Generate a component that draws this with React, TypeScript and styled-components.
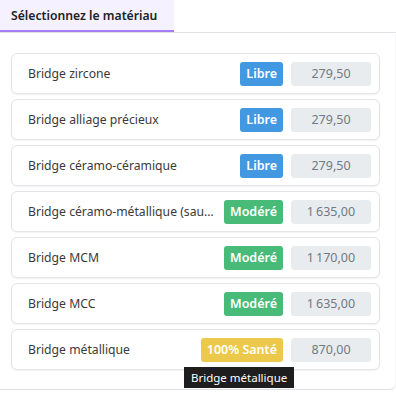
import React from 'react';
import styled, {createGlobalStyle} from "styled-components";

type Level = 'libre' | 'modere' | 'sante';

const items: {name: string; level: Level; price: string}[] = [
    {name: 'Bridge zircone', level: 'libre', price: '279,50'},
    {name: 'Bridge alliage précieux', level: 'libre', price: '279,50'},
    {name: 'Bridge céramo-céramique', level: 'libre', price: '279,50'},
    {name: 'Bridge céramo-métallique (sauf molaires)', level: 'modere', price: '1\u202f635,00'},
    {name: 'Bridge MCM', level: 'modere', price: '1\u202f170,00'},
    {name: 'Bridge MCC', level: 'modere', price: '1\u202f635,00'},
    {name: 'Bridge métallique', level: 'sante', price: '870,00'},
];

const labels: Record<Level, string> = {
    libre: 'Libre',
    modere: 'Modéré',
    sante: '100% Santé',
};

const colors: Record<Level, string> = {
    libre: '#4299e1',
    modere: '#48bb78',
    sante: '#ecc94b',
};

const App = () => {
    return (
        <>
            <GlobalStyle/>
            <Tabs>
                <Tab>Sélectionnez le matériau</Tab>
            </Tabs>
            <Panel>
                {items.map((item, i) => (
                    <Row key={i}>
                        <Name>{item.name}</Name>
                        <Badge level={item.level}>{labels[item.level]}</Badge>
                        <Price>{item.price}</Price>
                        {i === items.length - 1 && <Tooltip>{item.name}</Tooltip>}
                    </Row>
                ))}
            </Panel>
        </>
    );
};

export default App;

const GlobalStyle = createGlobalStyle`
    body {
        margin: 0;
        background: #fff;
        font-family: 'Noto Sans', 'Open Sans', sans-serif;
        color: #333;
    }
`

const Tabs = styled.div`
    display: flex;
    height: 32px;
    border-bottom: 1px solid #dee2e6;
`

const Tab = styled.div`
    width: 174px;
    box-sizing: border-box;
    padding: 0 11px;
    display: flex;
    align-items: center;
    background: #f5f1fe;
    border-bottom: 2px solid #a47cf3;
    font-size: 12.2px;
    font-weight: 600;
    color: #222;
    white-space: nowrap;
`

const Panel = styled.div`
    display: flex;
    flex-direction: column;
    gap: 5px;
    padding: 20px 15px 19px 11px;
    margin-right: 1px;
    border-bottom: 1px solid #dee2e6;
    border-bottom-right-radius: 6px;
    box-shadow: 1px 1px 1px rgba(0, 0, 0, 0.04);
`

const Row = styled.div`
    position: relative;
    height: 41px;
    box-sizing: border-box;
    display: flex;
    align-items: center;
    gap: 8px;
    padding: 0 8px 0 16px;
    border: 1px solid #e2e4e8;
    border-radius: 6px;
    box-shadow: 0 1px 2px rgba(0, 0, 0, 0.06);
    background: #fff;
`

const Name = styled.span`
    flex: 1;
    min-width: 0;
    white-space: nowrap;
    overflow: hidden;
    text-overflow: ellipsis;
    font-size: 12.2px;
    color: #3a3a3a;
`

const Badge = styled.span<{level: Level}>`
    height: 24px;
    padding: 0 6px;
    display: flex;
    align-items: center;
    border-radius: 3px;
    background: ${p => colors[p.level]};
    color: #fff;
    font-size: 12.5px;
    font-weight: 600;
    white-space: nowrap;
`

const Price = styled.span`
    width: 80px;
    height: 24px;
    display: flex;
    align-items: center;
    justify-content: center;
    border-radius: 3px;
    background: #e9ecef;
    color: #707a84;
    font-size: 12.5px;
`

const Tooltip = styled.div`
    position: absolute;
    top: 37px;
    left: 172px;
    z-index: 2;
    padding: 3px 7px;
    background: #1e1e1e;
    color: #fff;
    font-size: 11.5px;
    white-space: nowrap;
`
